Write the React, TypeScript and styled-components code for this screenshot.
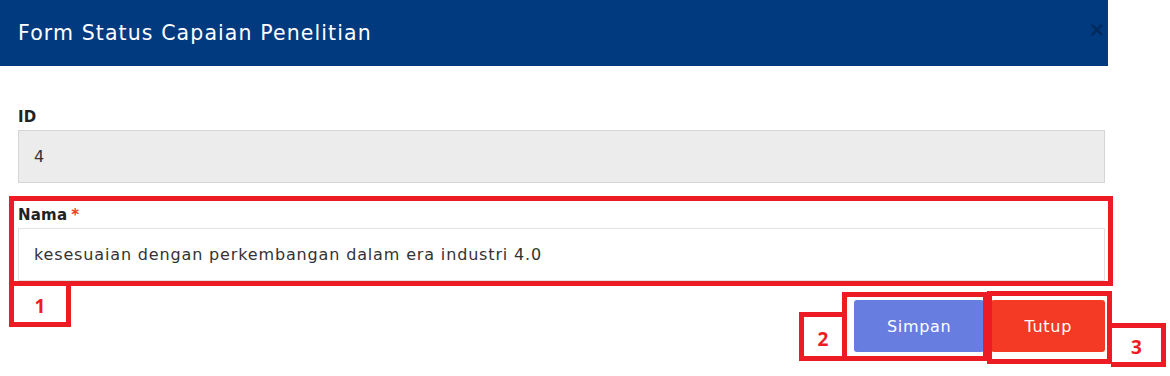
import React from "react";
import styled, {createGlobalStyle} from "styled-components";

const GlobalStyle = createGlobalStyle`
  * {
    box-sizing: border-box;
  }

  body {
    margin: 0;
    min-height: 376px;
    background: #ffffff;
    font-family: "DejaVu Sans", Inter, sans-serif;
    color: #333333;
  }
`;

const Modal = styled.div`
  width: 1108px;
  padding-bottom: 24px;
  background: #ffffff;
`;

const ModalHeader = styled.div`
  height: 66px;
  padding: 0 18px;
  background: #023a80;
  display: flex;
  align-items: center;
  justify-content: space-between;

  h4 {
    margin: 0;
    color: #ffffff;
    font-size: 20.5px;
    font-weight: 400;
    letter-spacing: 1.1px;
  }
`;

const CloseBtn = styled.button`
  border: none;
  background: none;
  padding: 0;
  margin-right: -14px;
  margin-top: -6px;
  font-family: "Liberation Sans", sans-serif;
  font-size: 24px;
  font-weight: 700;
  line-height: 1;
  color: #000000;
  opacity: 0.25;
  cursor: pointer;
`;

const ModalBody = styled.div`
  padding: 41px 3px 0 18px;
  display: flex;
  flex-direction: column;
  gap: 22px;
`;

const FormGroup = styled.div`
  position: relative;
  display: flex;
  flex-direction: column;
  gap: 3px;
`;

const Label = styled.label`
  font-size: 15px;
  font-weight: 700;
  color: #222222;
  line-height: 20px;
  letter-spacing: 0.2px;

  span {
    color: #f33a25;
    margin-left: 4px;
  }
`;

const Input = styled.input<{ $readOnly?: boolean }>`
  height: 53px;
  width: 100%;
  padding: 0 15px;
  font-family: inherit;
  font-size: 16px;
  letter-spacing: 0.85px;
  color: #333333;
  border: 1px solid ${p => p.$readOnly ? "#d5d5d5" : "#e2e2e2"};
  background: ${p => p.$readOnly ? "#ececec" : "#ffffff"};
  border-radius: 0;
  outline: none;
`;

const Footer = styled.div`
  display: flex;
  justify-content: flex-end;
  gap: 7px;
  padding: 19px 3px 0 0;
`;

const Callout = styled.div`
  position: relative;
  display: flex;
`;

const Button = styled.button<{ $variant: "primary" | "danger" }>`
  height: 52px;
  padding: 0 33px;
  border: none;
  border-radius: 3px;
  font-family: inherit;
  font-size: 16px;
  letter-spacing: 0.7px;
  color: #ffffff;
  background: ${p => p.$variant === "primary" ? "#687de0" : "#f43a25"};
  cursor: pointer;
`;

/* annotation overlays drawn on top of the screenshot */
const Frame = styled.div<{ $t: number; $r: number; $b: number; $l: number }>`
  position: absolute;
  top: ${p => p.$t}px;
  right: ${p => p.$r}px;
  bottom: ${p => p.$b}px;
  left: ${p => p.$l}px;
  border: 5px solid #ed1c24;
  pointer-events: none;
`;

const Tag = styled.div<{ $t: number; $l: number; $w: number; $h: number; $open: "top" | "right" | "left" }>`
  position: absolute;
  top: ${p => p.$t}px;
  left: ${p => p.$l}px;
  width: ${p => p.$w}px;
  height: ${p => p.$h}px;
  border: 5px solid #ed1c24;
  border-${p => p.$open}: none;
  display: flex;
  align-items: center;
  justify-content: center;
  color: #ed1c24;
  font-family: "Open Sans", sans-serif;
  font-weight: 700;
  font-size: 19px;
  padding-top: 4px;
`;

const App = () => {
    return (
        <>
            <GlobalStyle/>
            <Modal>
                <ModalHeader>
                    <h4>Form Status Capaian Penelitian</h4>
                    <CloseBtn>×</CloseBtn>
                </ModalHeader>
                <ModalBody>
                    <FormGroup>
                        <Label>ID</Label>
                        <Input $readOnly readOnly value="4"/>
                    </FormGroup>
                    <FormGroup>
                        <Label>Nama<span>*</span></Label>
                        <Input defaultValue="kesesuaian dengan perkembangan dalam era industri 4.0"/>
                        <Frame $t={-9} $r={-8} $b={-5} $l={-9}>
                            <Tag $t={84} $l={-5} $w={62} $h={42} $open="top">1</Tag>
                        </Frame>
                    </FormGroup>
                </ModalBody>
                <Footer>
                    <Callout>
                        <Button $variant="primary">Simpan</Button>
                        <Frame $t={-8} $r={-4} $b={-9} $l={-12}>
                            <Tag $t={15} $l={-48} $w={43} $h={49} $open="right">2</Tag>
                        </Frame>
                    </Callout>
                    <Callout>
                        <Button $variant="danger">Tutup</Button>
                        <Frame $t={-9} $r={-7} $b={-12} $l={-4}>
                            <Tag $t={27} $l={119} $w={55} $h={44} $open="left">3</Tag>
                        </Frame>
                    </Callout>
                </Footer>
            </Modal>
        </>
    );
};

export default App;
